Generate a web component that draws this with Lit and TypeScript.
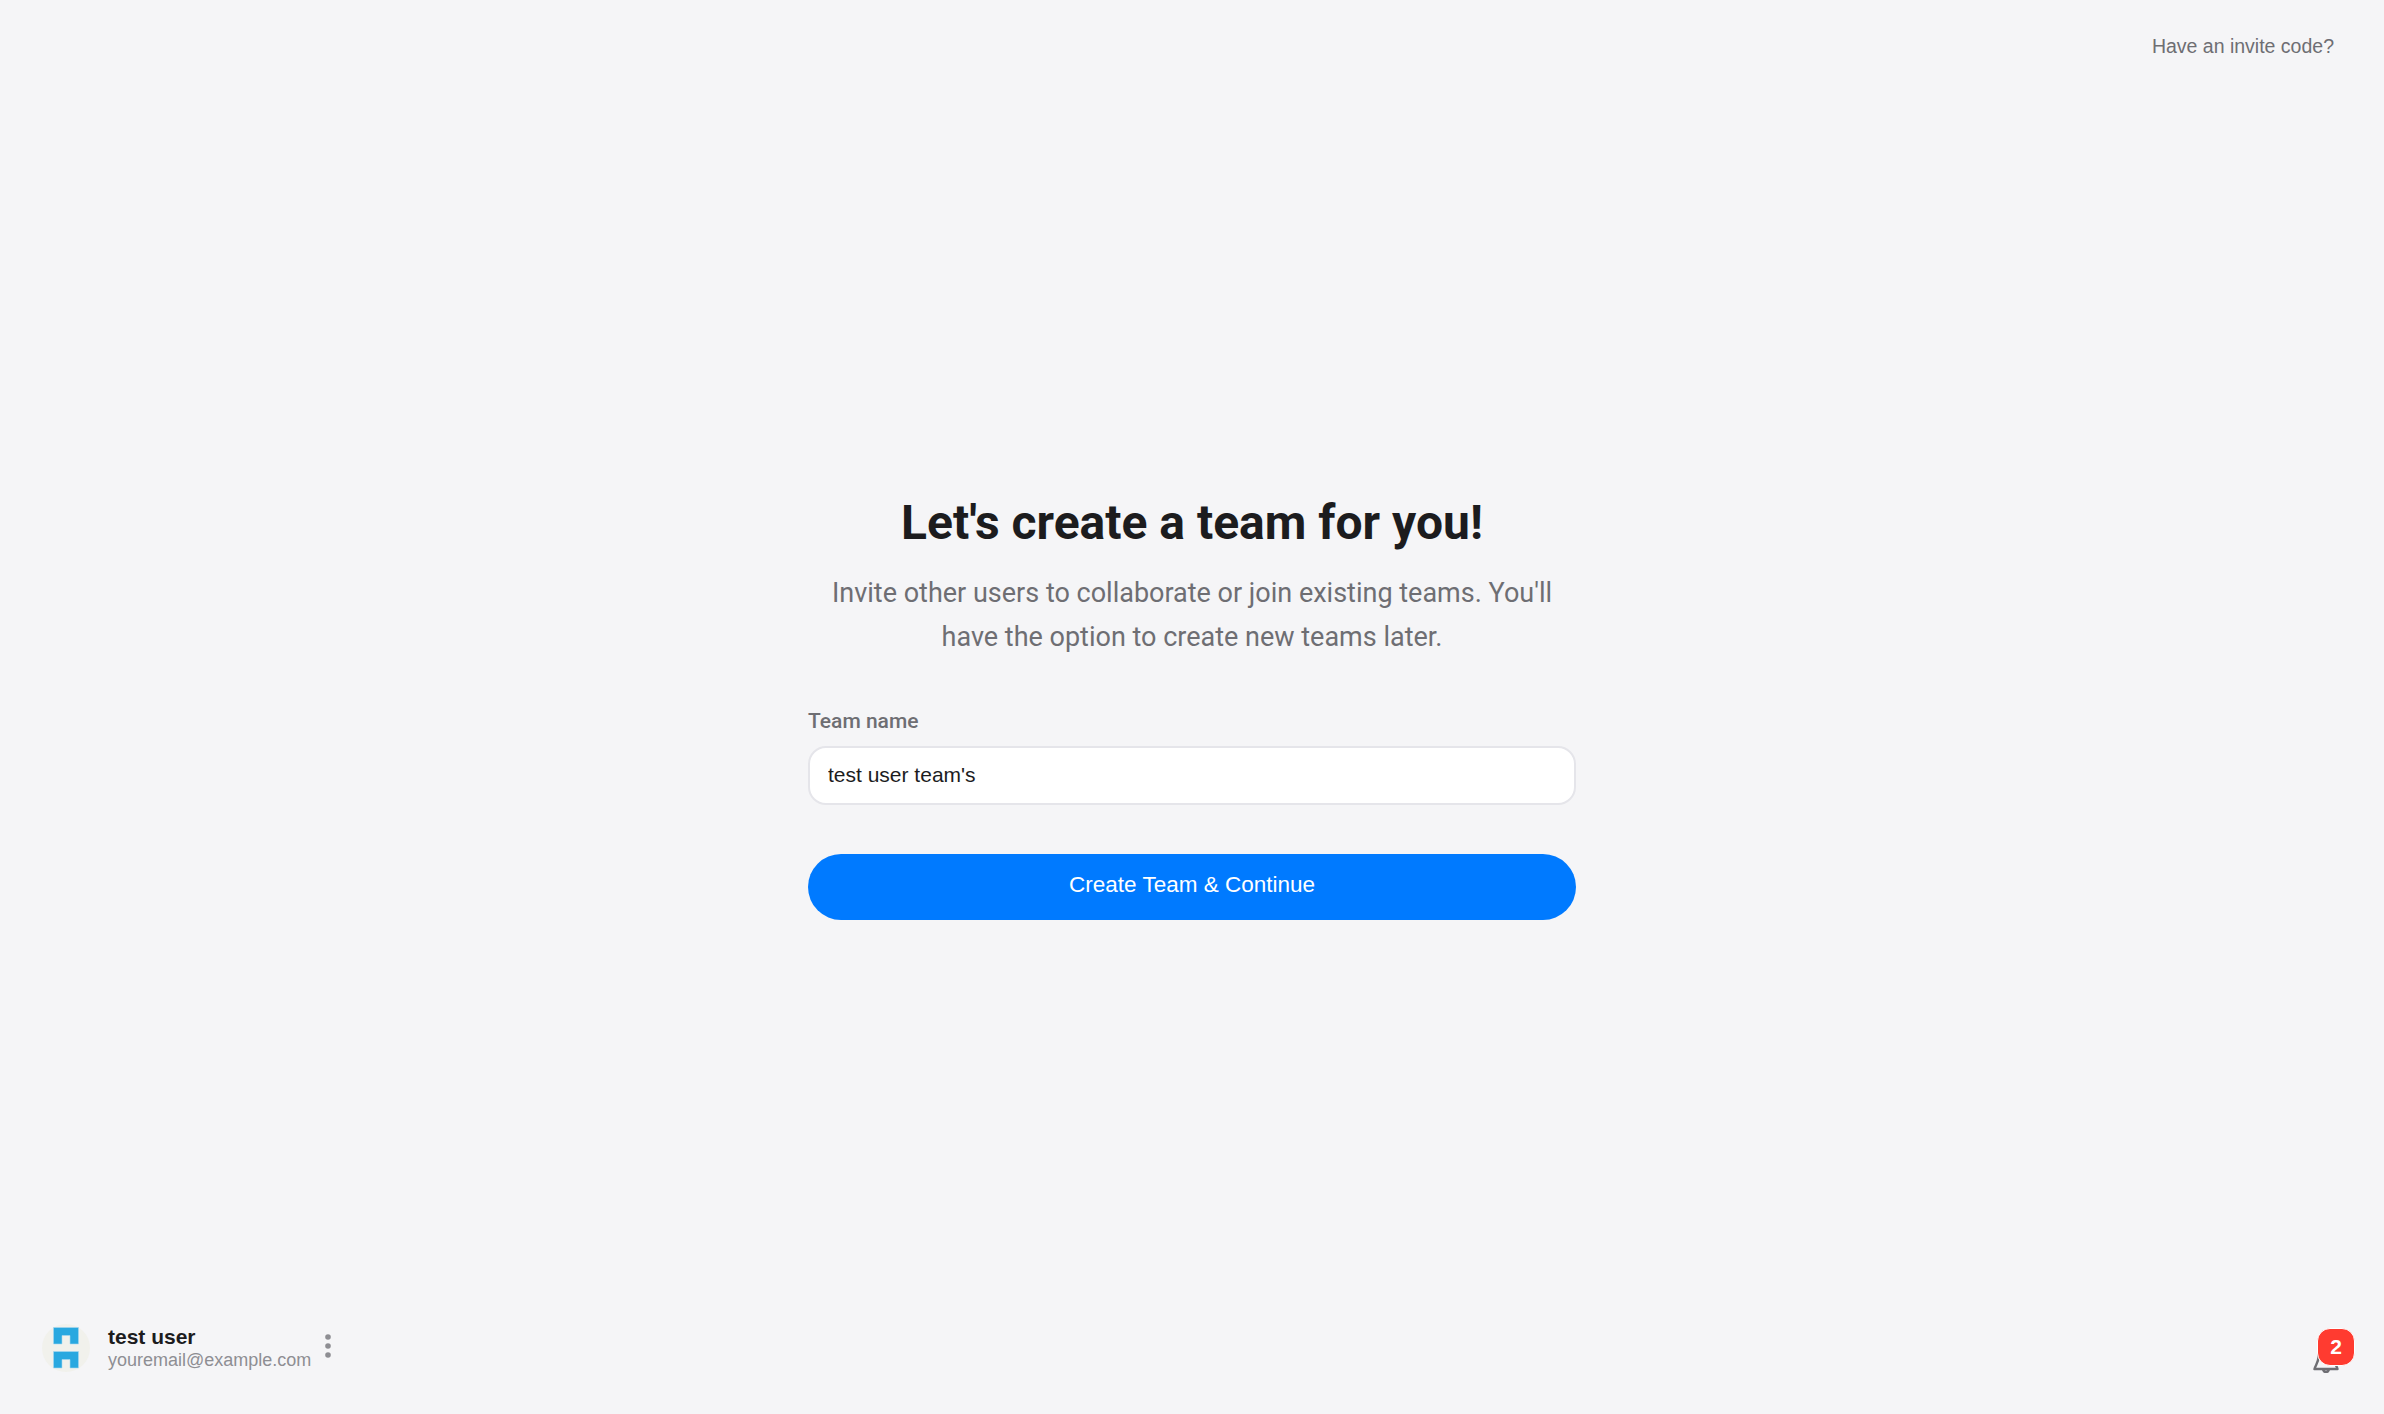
import { LitElement, html, css } from "lit";
import { customElement } from "lit/decorators.js";

const speckles: [number, number][] = [
  [5, 18], [9, 24], [13, 20], [5, 30], [10, 33], [8, 14], [15, 26], [12, 14],
  [43, 18], [39, 24], [35, 20], [43, 30], [38, 33], [40, 14], [33, 26], [36, 14],
  [17, 24], [21, 25], [25, 24], [29, 25], [14, 24], [24, 45], [24, 3],
];

@customElement("app-root")
export class AppRoot extends LitElement {
  static styles = css`
    :host { display: block; font-family: "Liberation Sans", Arial, sans-serif; }
    .page { height: 1414px; background: #f5f5f7; display: grid; grid-template-rows: auto 1fr auto; box-sizing: border-box; }
    .top { display: flex; justify-content: flex-end; padding: 34px 50px 0 0; }
    .invite { font-size: 19.5px; line-height: 24px; color: #6e6e73; }
    .main { display: flex; flex-direction: column; align-items: center; padding-top: 435px; }
    h1 { margin: 0; font: 700 48px/60px Roboto, sans-serif; color: #1c1c1e; text-align: center; }
    .sub { margin: 18px 0 0; width: 768px; font: 400 27px/44px Roboto, sans-serif; color: #6e6e73; text-align: center; }
    form { width: 768px; margin-top: 48px; display: flex; flex-direction: column; }
    label { font: 500 21px/28px Roboto, sans-serif; color: #6e6e73; }
    input { box-sizing: border-box; margin-top: 11px; width: 100%; height: 59px; padding: 0 18px 2px; border: 2px solid #e5e5ea; border-radius: 18px; background: #fff; font: 400 21px "Liberation Sans", Arial, sans-serif; color: #1c1c1e; outline: none; }
    button { margin-top: 49px; height: 66px; width: 100%; padding: 0 0 5px; border: 0; border-radius: 33px; background: #007aff; color: #fff; font: 400 22.5px "Liberation Sans", Arial, sans-serif; }
    .bottom { display: flex; justify-content: space-between; align-items: center; padding: 0 38px 35px 42px; height: 62px; }
    .user { display: flex; align-items: center; }
    .avatar { display: block; width: 48px; height: 48px; }
    .info { margin-left: 18px; display: flex; flex-direction: column; }
    .name { font-size: 21px; line-height: 24px; font-weight: 700; color: #1c1c1e; }
    .email { font-size: 18px; line-height: 22px; color: #8e8e93; }
    .dots { margin: 0 0 4px 13px; display: flex; }
    .bell { position: relative; align-self: flex-start; margin-top: 11px; width: 40px; height: 45px; display: flex; align-items: flex-end; justify-content: center; }
    .badge { position: absolute; left: 11px; top: 0; box-sizing: border-box; width: 38px; height: 38px; border: 1px solid #fff; border-radius: 13px; background: #ff3b30; color: #fff; font-size: 21px; font-weight: 700; display: flex; align-items: center; justify-content: center; }
  `;

  render() {
    return html`
      <div class="page">
        <div class="top"><span class="invite">Have an invite code?</span></div>
        <div class="main">
          <h1>Let's create a team for you!</h1>
          <p class="sub">Invite other users to collaborate or join existing teams. You'll have the option to create new teams later.</p>
          <form>
            <label>Team name</label>
            <input type="text" .value=${"test user team's"} />
            <button type="button">Create Team &amp; Continue</button>
          </form>
        </div>
        <div class="bottom">
          <div class="user">
            <svg class="avatar" viewBox="0 0 48 48">
              <circle cx="24" cy="24" r="24" fill="#f1f1ec"></circle>
              <g fill="#c4ddd6">${speckles.map(([x, y]) => html`<circle cx=${x} cy=${y} r="0.8"></circle>`)}</g>
              <path fill="#29a8e0" stroke="#a9d9f0" stroke-width="0.6" d="M11.5 3.500h25v16.500h-8.500v-8.500h-8v8.500h-8.500zM11.500 27.500h25v16.500h-8.500v-8.500h-8v8.500h-8.500z"></path>
            </svg>
            <div class="info"><span class="name">test user</span><span class="email">youremail@example.com</span></div>
            <div class="dots">
              <svg width="8" height="28" viewBox="0 0 8 28"><g fill="#8e8e93"><circle cx="4" cy="5" r="2.8"></circle><circle cx="4" cy="14" r="2.8"></circle><circle cx="4" cy="23" r="2.8"></circle></g></svg>
            </div>
          </div>
          <div class="bell">
            <svg width="26" height="26" viewBox="0 0 26 26" fill="none" stroke="#6e6e73" stroke-width="2.4" stroke-linecap="round" stroke-linejoin="round"><path d="M13 2a7.500 7.500 0 0 0-7.500 7.500c0 6-3 8.500-4 12.500h23c-1-4-4-6.500-4-12.500A7.500 7.500 0 0 0 13 2zM10 22a3 3 0 0 0 6 0"></path></svg>
            <div class="badge">2</div>
          </div>
        </div>
      </div>
    `;
  }
}
